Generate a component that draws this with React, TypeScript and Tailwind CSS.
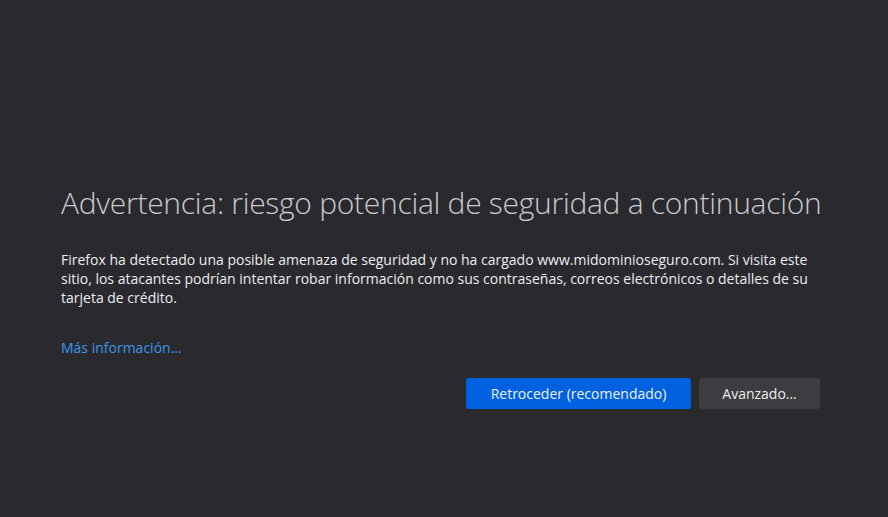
import React from 'react';

export default function App() {
    return (
        <div
            className="w-full h-[517px] bg-[#2a2a2e] text-[#e8e8ea] overflow-hidden"
            style={{ fontFamily: '"Open Sans", "Noto Sans", sans-serif' }}
        >
            <div className="ml-[61px] mr-[58px] pt-[181px]">
                {/* Title */}
                <h1 className="text-[30px] leading-[44px] font-light tracking-[-0.28px] text-[#c9c9cd] whitespace-nowrap">
                    Advertencia: riesgo potencial de seguridad a continuación
                </h1>

                {/* Description */}
                <p className="mt-[25px] text-[14px] leading-[19px] text-[#ececee]">
                    Firefox ha detectado una posible amenaza de seguridad y no ha cargado
                    www.midominioseguro.com. Si visita este sitio, los atacantes podrían
                    intentar robar información como sus contraseñas, correos electrónicos o
                    detalles de su tarjeta de crédito.
                </p>

                {/* Learn more */}
                <a className="block mt-[31px] text-[14px] leading-[19px] text-[#3d95ec]">
                    Más información…
                </a>

                {/* Buttons */}
                <div className="flex justify-end gap-[8px] mt-[21px] mr-[10px]">
                    <button className="h-[31px] w-[225px] rounded-[2px] bg-[#0061e0] text-[14px] text-[#f0f0f4]">
                        Retroceder (recomendado)
                    </button>
                    <button className="h-[31px] w-[121px] rounded-[2px] bg-[#3d3d41] text-[14px] text-[#ececee]">
                        Avanzado…
                    </button>
                </div>
            </div>
        </div>
    );
}
